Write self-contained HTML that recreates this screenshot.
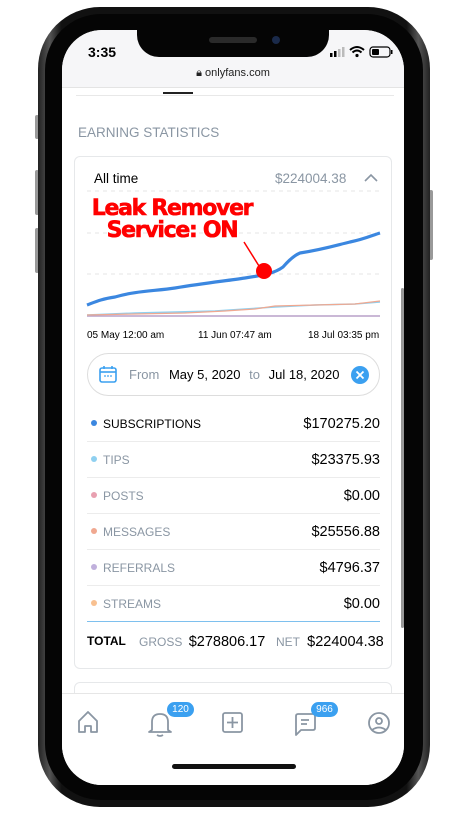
<!DOCTYPE html>
<html><head><style>
*{margin:0;padding:0;box-sizing:border-box}
body{width:468px;height:814px;background:#fff;position:relative;overflow:hidden;font-family:"Liberation Sans",sans-serif}
.abs{position:absolute}
.frame{left:38px;top:7px;width:392px;height:800px;border-radius:62px;background:linear-gradient(90deg,#222,#555 3%,#111 6%,#111 94%,#555 97%,#222);}
.inner{left:45px;top:14px;width:378px;height:786px;border-radius:56px;background:#050505}
.screen{left:62px;top:30px;width:342px;height:755px;border-radius:40px;background:#fff;overflow:hidden}
.row{position:absolute;left:12px;width:293px;height:36px;border-bottom:1px solid #ececec;font-size:12px;color:#8a96a3}
.row .d{position:absolute;left:4px;top:14px;width:6px;height:6px;border-radius:50%}
.row .l{position:absolute;left:16px;top:11px}
.row .v{position:absolute;right:0;top:10px;font-size:14.5px;color:#000}
</style></head><body>
<div class="abs" style="left:35px;top:115px;width:4px;height:24px;background:#999;border-radius:2px"></div>
<div class="abs" style="left:35px;top:170px;width:4px;height:45px;background:#999;border-radius:2px"></div>
<div class="abs" style="left:35px;top:228px;width:4px;height:45px;background:#999;border-radius:2px"></div>
<div class="abs" style="left:429px;top:190px;width:4px;height:70px;background:#999;border-radius:2px"></div>
<div class="abs frame"></div>
<div class="abs inner"></div>
<div class="abs screen">
  <div class="abs" style="left:0;top:0;width:342px;height:58px;background:#f6f6f8;border-bottom:1px solid #e4e4e4"></div>
  <div class="abs" style="left:75px;top:-2px;width:192px;height:29px;background:#050505;border-radius:0 0 22px 22px"></div>
  <div class="abs" style="left:147px;top:7px;width:48px;height:6px;background:#2a2a2a;border-radius:3px"></div>
  <div class="abs" style="left:210px;top:6px;width:8px;height:8px;background:#1a2a4a;border-radius:50%"></div>
  <div class="abs" style="left:26px;top:14px;font-size:14px;font-weight:bold">3:35</div>
  <svg class="abs" style="left:268px;top:15px" width="66" height="14" viewBox="0 0 66 14">
    <rect x="0" y="8" width="2.5" height="4" fill="#000"/><rect x="4" y="6" width="2.5" height="6" fill="#000"/><rect x="8" y="4" width="2.5" height="8" fill="#bbb"/><rect x="12" y="2" width="2.5" height="10" fill="#bbb"/>
    <path d="M20 5 Q27 -1 34 5 M22.5 7.5 Q27 3.5 31.5 7.5" stroke="#000" stroke-width="2" fill="none"/><circle cx="27" cy="10.5" r="1.6"/>
    <rect x="40" y="2" width="20" height="10" rx="3" fill="none" stroke="#000" stroke-width="1.2"/><rect x="42" y="4" width="7" height="6" rx="1" fill="#000"/><rect x="61" y="5" width="1.5" height="4" fill="#000"/>
  </svg>
  <div class="abs" style="left:0;top:37px;width:342px;text-align:center;font-size:11px;color:#222">&#128274;&#xFE0E; onlyfans.com</div>
  <div class="abs" style="left:14px;top:65px;width:318px;height:1px;background:#e8e8e8"></div>
  <div class="abs" style="left:101px;top:62px;width:30px;height:2px;background:#222"></div>
  <div class="abs" style="left:16px;top:95px;font-size:13.5px;color:#8a96a3">EARNING STATISTICS</div>
  <div class="abs" style="left:12px;top:126px;width:318px;height:513px;border:1px solid #e6e8ea;border-radius:6px">
    <div class="abs" style="left:19px;top:14px;font-size:13.5px;color:#000">All time</div>
    <div class="abs" style="left:200px;top:14px;font-size:13.5px;color:#8a96a3">$224004.38</div>
    <svg class="abs" style="left:288px;top:15px" width="16" height="12"><path d="M2 9 L8 3 L14 9" stroke="#8a96a3" stroke-width="1.6" fill="none"/></svg>
    <svg class="abs" style="left:0;top:30px" width="318" height="140" viewBox="0 0 318 140">
      <g stroke="#e4e4e4" stroke-dasharray="4 4"><line x1="12" y1="4" x2="305" y2="4"/><line x1="12" y1="46" x2="305" y2="46"/><line x1="12" y1="87" x2="305" y2="87"/></g>
      <line x1="12" y1="129" x2="305" y2="129" stroke="#b9a0c8" stroke-width="1.5"/>
      <path d="M12 128 L60 126 L100 125 L140 124 L170 122 L200 120 L240 118 L280 117 L305 115" stroke="#8fd0f0" stroke-width="1.5" fill="none"/>
      <path d="M12 128 L60 127 L110 126 L150 124 L180 122 L200 119 L240 118 L280 117 L305 114" stroke="#f0a890" stroke-width="1.2" fill="none"/>
      <path d="M12 118 C20 115 26 112 40 110 C60 104 80 104 100 101 C130 96 150 94 170 91 C190 88 200 86 208 80 C215 72 220 68 225 66 C250 62 262 58 275 55 C290 52 298 48 305 46" stroke="#3b87e0" stroke-width="3.2" fill="none"/>
      <line x1="169" y1="55" x2="184" y2="79" stroke="#f00" stroke-width="1.5"/>
      <circle cx="189" cy="84" r="8" fill="#f00"/>
    </svg>
    <div class="abs" style="left:-3px;top:41px;width:200px;text-align:center;color:#f00;font-weight:bold;font-size:22px;line-height:22px;letter-spacing:-1.3px;font-family:'DejaVu Sans',sans-serif;-webkit-text-stroke:0.6px #f00">Leak Remover<br>Service: ON</div>
    <div class="abs" style="left:12px;top:173px;font-size:10px;color:#000">05 May 12:00 am</div>
    <div class="abs" style="left:123px;top:173px;font-size:10px;color:#000">11 Jun 07:47 am</div>
    <div class="abs" style="left:233px;top:173px;font-size:10px;color:#000">18 Jul 03:35 pm</div>
    <div class="abs" style="left:12px;top:196px;width:293px;height:43px;border:1px solid #ddd;border-radius:22px">
      <svg class="abs" style="left:10px;top:10px" width="20" height="20" viewBox="0 0 20 20"><rect x="2" y="4" width="16" height="14" rx="2" fill="none" stroke="#3ba0f0" stroke-width="1.6"/><line x1="2" y1="8" x2="18" y2="8" stroke="#3ba0f0" stroke-width="1.6"/><line x1="6" y1="2" x2="6" y2="5" stroke="#3ba0f0" stroke-width="1.6"/><line x1="14" y1="2" x2="14" y2="5" stroke="#3ba0f0" stroke-width="1.6"/><circle cx="7" cy="12" r=".9" fill="#3ba0f0"/><circle cx="10" cy="12" r=".9" fill="#3ba0f0"/><circle cx="13" cy="12" r=".9" fill="#3ba0f0"/></svg>
      <div class="abs" style="left:41px;top:13px;font-size:13px;color:#8a96a3;white-space:nowrap">From <span style="color:#000;margin-left:6px">May 5, 2020</span> <span style="margin:0 5px">to</span> <span style="color:#000">Jul 18, 2020</span></div>
      <svg class="abs" style="left:263px;top:12px" width="18" height="18"><circle cx="9" cy="9" r="9" fill="#3ba0f0"/><path d="M5.5 5.5 L12.5 12.5 M12.5 5.5 L5.5 12.5" stroke="#fff" stroke-width="1.8"/></svg>
    </div>
    <div class="row" style="top:249px"><span class="d" style="background:#3b87e0"></span><span class="l" style="color:#000">SUBSCRIPTIONS</span><span class="v">$170275.20</span></div>
    <div class="row" style="top:285px"><span class="d" style="background:#8fd0f0"></span><span class="l">TIPS</span><span class="v">$23375.93</span></div>
    <div class="row" style="top:321px"><span class="d" style="background:#e8a0b0"></span><span class="l">POSTS</span><span class="v">$0.00</span></div>
    <div class="row" style="top:357px"><span class="d" style="background:#f0a890"></span><span class="l">MESSAGES</span><span class="v">$25556.88</span></div>
    <div class="row" style="top:393px"><span class="d" style="background:#c0b0dc"></span><span class="l">REFERRALS</span><span class="v">$4796.37</span></div>
    <div class="row" style="top:429px;border-bottom:1.5px solid #7ec0ee"><span class="d" style="background:#f8c090"></span><span class="l">STREAMS</span><span class="v">$0.00</span></div>
    <div class="abs" style="left:12px;top:477px;width:293px;font-size:12px;color:#8a96a3;white-space:nowrap">
      <span style="color:#000;font-weight:bold">TOTAL</span>
      <span class="abs" style="left:52px;top:0">GROSS <span style="color:#000;font-size:14.5px;margin-left:3px">$278806.17</span></span>
      <span class="abs" style="left:189px;top:0">NET <span style="color:#000;font-size:14.5px;margin-left:4px">$224004.38</span></span>
    </div>
  </div>
  <div class="abs" style="left:12px;top:652px;width:318px;height:40px;border:1px solid #e6e8ea;border-radius:6px"></div>
  <div class="abs" style="left:339px;top:258px;width:3px;height:340px;background:#999;border-radius:2px"></div>
  <div class="abs" style="left:0;top:663px;width:342px;height:92px;background:#fff;border-top:1px solid #e6e6e6"></div>
  <svg class="abs" style="left:14px;top:676px" width="320" height="34" viewBox="0 0 320 34">
    <g stroke="#8a96a3" stroke-width="1.8" fill="none" stroke-linejoin="round">
      <path d="M3 15 L12 6 L21 15 L21 26 L15 26 L15 20 L9 20 L9 26 L3 26 Z"/>
      <path d="M76 24 L76 16 Q76 8 84 8 Q92 8 92 16 L92 24 L95 26 L73 26 Z M81 29 Q84 31 87 29"/>
      <rect x="147" y="7" width="19" height="19" rx="2"/><path d="M156.5 11 V22 M151 16.5 H162"/>
      <path d="M220 10 Q220 8 222 8 L237 8 Q239 8 239 10 L239 22 Q239 24 237 24 L225 24 L220 29 Z M225 14 H233 M225 18 H231"/>
      <circle cx="303" cy="17" r="10"/><circle cx="303" cy="15" r="3"/><path d="M296 24 Q303 19 310 24"/>
    </g>
  </svg>
  <div class="abs" style="left:105px;top:672px;width:27px;height:15px;border-radius:8px;background:#3ba0f0;color:#fff;font-size:10px;text-align:center;line-height:15px">120</div>
  <div class="abs" style="left:249px;top:672px;width:27px;height:15px;border-radius:8px;background:#3ba0f0;color:#fff;font-size:10px;text-align:center;line-height:15px">966</div>
  <div class="abs" style="left:110px;top:734px;width:124px;height:5px;border-radius:3px;background:#111"></div>
</div>
</body></html>
